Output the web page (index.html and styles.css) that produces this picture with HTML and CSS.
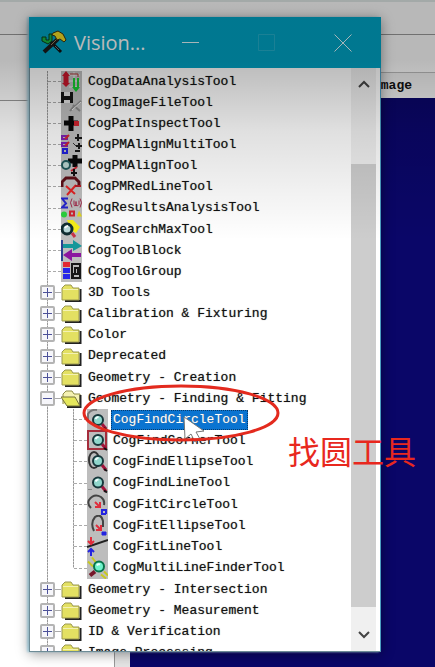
FILE: index.html
```html
<!DOCTYPE html>
<html lang="en">
<head>
<meta charset="utf-8">
<meta name="viewport" content="width=device-width, initial-scale=1">
<title>Vision tools</title>
<link rel="stylesheet" href="styles.css">
</head>
<body>
<svg class="defs" aria-hidden="true">
  <symbol id="folder" viewBox="0 0 21 21">
    <path d="M4 19h15.500V7" fill="none" stroke="#222" stroke-width="2"/>
    <path d="M1 18V6l3-3h6l2 3h6v12z" fill="#e3e062" stroke="#9a9850"/>
    <path d="M2 7.500h15" stroke="#f4f2b4" stroke-width="1"/>
  </symbol>
  <symbol id="folder-open" viewBox="0 0 21 21">
    <path d="M2 16V6l3-3h6l2 3h6v12" fill="#f4f1b2" stroke="#8d8b45"/>
    <path d="M19.500 7v12H6" fill="none" stroke="#222" stroke-width="2"/>
    <path d="M0 9h14l5 9H6z" fill="#e6e85c" stroke="#74723a"/>
  </symbol>
  <symbol id="lens" viewBox="0 0 21 21">
    <path d="M15 14l4 5" stroke="#a3123a" stroke-width="3"/>
    <path d="M17 18l3 2" stroke="#111" stroke-width="2"/>
    <circle cx="11" cy="10" r="5" fill="#8fd6cb" stroke="#17373b" stroke-width="2"/>
    <path d="M8.500 9q1-2 3-2" stroke="#f4ffff" stroke-width="2" fill="none"/>
  </symbol>
  <symbol id="data" viewBox="0 0 21 21">
    <path d="M8 4h11M8 10h11M8 16h11M13 1v17" stroke="#e8e8e8"/>
    <path d="M5 4v9" stroke="#c7172b" stroke-width="5"/>
    <path d="M1 5l4-5 4 5zM1 12l4 4 4-4z" fill="#c7172b"/>
    <path d="M9 3h8v3" stroke="#a33" fill="none"/>
    <path d="M13 7v10M17 7v10" stroke="#16c92f" stroke-width="2"/>
    <path d="M11 16l4 5 4-5z" fill="#16c92f"/>
  </symbol>
  <symbol id="file" viewBox="0 0 21 21">
    <path d="M0 0h3v11H0zM9 0h3v11H9zM3 4h6v4H3z" fill="#151515"/>
    <path d="M3 0h6v4H3zM3 8h6v3H3z" fill="#e0e0e0"/>
    <path d="M10 18L20 9M12 13l7 6M9 19l4-5" stroke="#8c8c8c" stroke-width="2"/>
    <path d="M11 18l9-8" stroke="#eee"/>
  </symbol>
  <symbol id="inspect" viewBox="0 0 21 21">
    <path d="M10 3v15M3 10h14" stroke="#080808" stroke-width="5"/>
    <path d="M13 8h5v5h-5z" fill="#d12530"/>
  </symbol>
  <symbol id="multi" viewBox="0 0 21 21">
    <path d="M1 2h5v3H1zM1 9h5v3H1z" fill="none" stroke="#7d22b5" stroke-width="2"/>
    <path d="M4 5l4-4M4 12l4-4" stroke="#d12530" stroke-width="2"/>
    <path d="M2 15h4v4H2z" fill="none" stroke="#2020db" stroke-width="2"/>
    <path d="M17 0v7M14 4h7M18 9v6M15 12h6M14 17h5" stroke="#171717" stroke-width="2"/>
    <path d="M12 9l3 3" stroke="#333"/>
  </symbol>
  <symbol id="align" viewBox="0 0 21 21">
    <path d="M14 0v12M7 6h14" stroke="#080808" stroke-width="5"/>
    <circle cx="5" cy="10" r="4" fill="#b8d4cf" stroke="#20585a" stroke-width="2"/>
    <path d="M10 16l6-4" stroke="#d12530" stroke-width="2"/>
    <path d="M13 14v7M10 18h6" stroke="#111" stroke-width="2"/>
  </symbol>
  <symbol id="redline" viewBox="0 0 21 21">
    <path d="M1 11V6l4-4h9l4 4v4" fill="none" stroke="#5c1017" stroke-width="3"/>
    <path d="M5 10l9 8M15 9l-9 10" stroke="#e02424" stroke-width="2"/>
    <path d="M14 10h6" stroke="#b51c24" stroke-width="2"/>
  </symbol>
  <symbol id="results" viewBox="0 0 21 21">
    <path d="M7 1H1l4 5-4 4h6" fill="none" stroke="#2525cc" stroke-width="2"/>
    <path d="M11 1q-3 4 0 9M19 1q3 4 0 9M13 3v4q0 2 2 1V4v4q2 1 3-1V3" fill="none" stroke="#a02b4b"/>
    <circle cx="3" cy="17" r="3" fill="#2bd13d"/>
    <path d="M9 14h4v4H9z" fill="none" stroke="#cf2230" stroke-width="2"/>
    <path d="M16 19l2-6 3 6z" fill="#e0d51e"/>
  </symbol>
  <symbol id="search" viewBox="0 0 21 21">
    <path d="M6 1h6l7 7-4 6-5-3z" fill="#f6ee19"/>
    <circle cx="6" cy="10" r="5" fill="#b8d8d8" stroke="#112d31" stroke-width="3"/>
    <path d="M4 9q1-2 3-2" stroke="#fff" stroke-width="2" fill="none"/>
    <path d="M11 14l3 4" stroke="#c83448" stroke-width="3"/>
  </symbol>
  <symbol id="block" viewBox="0 0 21 21">
    <path d="M1 0v21" stroke="#2b4190" stroke-width="2"/>
    <path d="M2 4h10V0l9 6-9 5V8H2z" fill="#15979a"/>
    <path d="M20 13h-9v-4l-9 6 9 6v-4h9z" fill="#8b159f"/>
  </symbol>
  <symbol id="group" viewBox="0 0 21 21">
    <path d="M2 1h7v5H2z" fill="#e22932"/>
    <path d="M2 7h7v5H2zM2 13h7v5H2z" fill="#2525e8"/>
    <path d="M11 3h8v14h-8z" fill="#bbb" stroke="#181818" stroke-width="2"/>
    <path d="M14 7h3v6h-3zM12 12v4" fill="none" stroke="#181818" stroke-width="2"/>
  </symbol>
  <symbol id="find-circle" viewBox="0 0 21 21">
    <path d="M1 12V5q3-5 9-4" fill="none" stroke="#777" stroke-width="2"/>
    <use href="#lens" y="1"/>
  </symbol>
  <symbol id="find-corner" viewBox="0 0 21 21">
    <path d="M1 1h18v18H1z" fill="none" stroke="#a52d3c" stroke-width="2"/>
    <use href="#lens"/>
  </symbol>
  <symbol id="find-ellipse" viewBox="0 0 21 21">
    <ellipse cx="7" cy="9" rx="5" ry="8" fill="none" stroke="#333" stroke-width="2"/>
    <use href="#lens"/>
  </symbol>
  <symbol id="find-line" viewBox="0 0 21 21">
    <path d="M1 17h4" stroke="#888"/>
    <use href="#lens"/>
  </symbol>
  <symbol id="fit-circle" viewBox="0 0 21 21">
    <path d="M4 14q-4-4-2-8 5-7 12-3 4 3 3 8" fill="none" stroke="#444" stroke-width="2"/>
    <path d="M8 8l5 5M13 8v5H8" fill="none" stroke="#df2e3d" stroke-width="2"/>
    <path d="M15 16h4v4M15 15v5h4" fill="none" stroke="#2424e0" stroke-width="2"/>
  </symbol>
  <symbol id="fit-ellipse" viewBox="0 0 21 21">
    <path d="M7 16Q3 8 8 2q6-4 8 4v6" fill="none" stroke="#444" stroke-width="2"/>
    <path d="M9 10l5 5M14 10v5H9" fill="none" stroke="#df2e3d" stroke-width="2"/>
    <path d="M15 17h4v3h-4z" fill="#2424e0" stroke="#2424e0"/>
  </symbol>
  <symbol id="fit-line" viewBox="0 0 21 21">
    <path d="M0 11L21 4" stroke="#222" stroke-width="2"/>
    <path d="M4 1v7M1 5l3 3 3-3" fill="none" stroke="#e22c3b" stroke-width="2"/>
    <path d="M4 20v-7M1 16l3-3 3 3" fill="none" stroke="#2424e0" stroke-width="2"/>
  </symbol>
  <symbol id="multi-line" viewBox="0 0 21 21">
    <path d="M1 4l5 5M5 0l4 5M14 17l5 4M17 14l4 4" stroke="#c8c81f" stroke-width="2"/>
    <path d="M8 14l-5 4" stroke="#761729" stroke-width="4"/>
    <circle cx="12" cy="9" r="5" fill="#70f3cb" stroke="#08734a" stroke-width="2"/>
    <path d="M10 8q1-2 3-1" stroke="#efffff" stroke-width="2" fill="none"/>
  </symbol>
</svg>

<div class="backdrop">
  <div class="strip"></div>
  <div class="panes">
    <div class="pane-left"><div class="toolbar"></div></div>
    <div class="gutter"></div>
    <div class="pane-right">
      <div class="toolbar-small"></div>
      <div class="tab">mage</div>
      <div class="canvas"></div>
    </div>
  </div>
</div>

<main class="window">
  <header class="titlebar">
    <svg class="app-icon" viewBox="0 0 26 26" aria-hidden="true">
      <path d="M9 11l11 11" stroke="#111" stroke-width="3"/>
      <path d="M14 16l4 4" stroke="#5e8790" stroke-width="1"/>
      <path d="M17 9L3 22" stroke="#1a1a1a" stroke-width="4"/>
      <path d="M17 8L10 15" stroke="#9b8060" stroke-width="1"/>
      <path d="M1 7h4v3h3V4h3v7l-4 3-6-3z" fill="#18b847" stroke="#0b3d1b" stroke-width="1"/>
      <path d="M12 3l5-2 5 3 3 6-2 2-4-3-3 1-2-4-3-1z" fill="#f4df25" stroke="#3c340b" stroke-width="1"/>
    </svg>
    <h1 class="title">Vision...</h1>
    <div class="controls">
      <button class="control" aria-label="Minimize"><svg viewBox="0 0 18 18"><path d="M0 8.500h17" /></svg></button>
      <button class="control" aria-label="Maximize" disabled><svg viewBox="0 0 18 18"><path d="M.5.5h16v16H.5z"/></svg></button>
      <button class="control" aria-label="Close"><svg viewBox="0 0 18 18"><path d="M.5.5l17 17M17.500.5l-17 17"/></svg></button>
    </div>
  </header>
  <div class="content">
    <div class="tree-view">
      <ul class="tree">
        <li><div class="row tool"><svg class="icon"><use href="#data"/></svg><span class="label">CogDataAnalysisTool</span></div></li>
        <li><div class="row tool"><svg class="icon"><use href="#file"/></svg><span class="label">CogImageFileTool</span></div></li>
        <li><div class="row tool"><svg class="icon"><use href="#inspect"/></svg><span class="label">CogPatInspectTool</span></div></li>
        <li><div class="row tool"><svg class="icon"><use href="#multi"/></svg><span class="label">CogPMAlignMultiTool</span></div></li>
        <li><div class="row tool"><svg class="icon"><use href="#align"/></svg><span class="label">CogPMAlignTool</span></div></li>
        <li><div class="row tool"><svg class="icon"><use href="#redline"/></svg><span class="label">CogPMRedLineTool</span></div></li>
        <li><div class="row tool"><svg class="icon"><use href="#results"/></svg><span class="label">CogResultsAnalysisTool</span></div></li>
        <li><div class="row tool"><svg class="icon"><use href="#search"/></svg><span class="label">CogSearchMaxTool</span></div></li>
        <li><div class="row tool"><svg class="icon"><use href="#block"/></svg><span class="label">CogToolBlock</span></div></li>
        <li><div class="row tool"><svg class="icon"><use href="#group"/></svg><span class="label">CogToolGroup</span></div></li>
        <li><div class="row"><button class="toggle" aria-label="Expand 3D Tools"></button><svg class="icon"><use href="#folder"/></svg><span class="label">3D Tools</span></div></li>
        <li><div class="row"><button class="toggle" aria-label="Expand Calibration &amp; Fixturing"></button><svg class="icon"><use href="#folder"/></svg><span class="label">Calibration &amp; Fixturing</span></div></li>
        <li><div class="row"><button class="toggle" aria-label="Expand Color"></button><svg class="icon"><use href="#folder"/></svg><span class="label">Color</span></div></li>
        <li><div class="row"><button class="toggle" aria-label="Expand Deprecated"></button><svg class="icon"><use href="#folder"/></svg><span class="label">Deprecated</span></div></li>
        <li><div class="row"><button class="toggle" aria-label="Expand Geometry - Creation"></button><svg class="icon"><use href="#folder"/></svg><span class="label">Geometry - Creation</span></div></li>
        <li>
          <div class="row"><button class="toggle open" aria-label="Collapse Geometry - Finding &amp; Fitting"></button><svg class="icon"><use href="#folder-open"/></svg><span class="label">Geometry - Finding &amp; Fitting</span></div>
          <ul class="branch">
            <li><div class="row tool"><svg class="icon"><use href="#find-circle"/></svg><span class="label selected">CogFindCircleTool</span>
              <svg class="ring" viewBox="0 0 200 60" aria-hidden="true"><ellipse cx="100" cy="30" rx="97" ry="27"/></svg>
              <svg class="cursor" viewBox="0 0 24 28" aria-hidden="true"><path d="M1 1l1 22 6-5 4 8 5-3-4-7 8-1z"/></svg></div></li>
            <li><div class="row tool"><svg class="icon"><use href="#find-corner"/></svg><span class="label">CogFindCornerTool</span></div></li>
            <li><div class="row tool"><svg class="icon"><use href="#find-ellipse"/></svg><span class="label">CogFindEllipseTool</span></div></li>
            <li><div class="row tool"><svg class="icon"><use href="#find-line"/></svg><span class="label">CogFindLineTool</span></div></li>
            <li><div class="row tool"><svg class="icon"><use href="#fit-circle"/></svg><span class="label">CogFitCircleTool</span></div></li>
            <li><div class="row tool"><svg class="icon"><use href="#fit-ellipse"/></svg><span class="label">CogFitEllipseTool</span></div></li>
            <li><div class="row tool"><svg class="icon"><use href="#fit-line"/></svg><span class="label">CogFitLineTool</span></div></li>
            <li><div class="row tool"><svg class="icon"><use href="#multi-line"/></svg><span class="label">CogMultiLineFinderTool</span></div></li>
          </ul>
        </li>
        <li><div class="row"><button class="toggle" aria-label="Expand Geometry - Intersection"></button><svg class="icon"><use href="#folder"/></svg><span class="label">Geometry - Intersection</span></div></li>
        <li><div class="row"><button class="toggle" aria-label="Expand Geometry - Measurement"></button><svg class="icon"><use href="#folder"/></svg><span class="label">Geometry - Measurement</span></div></li>
        <li><div class="row"><button class="toggle" aria-label="Expand ID &amp; Verification"></button><svg class="icon"><use href="#folder"/></svg><span class="label">ID &amp; Verification</span></div></li>
        <li><div class="row"><button class="toggle" aria-label="Expand Image Processing"></button><svg class="icon"><use href="#folder"/></svg><span class="label">Image Processing</span></div></li>
      </ul>
    </div>
    <div class="scrollbar">
      <button class="arrow" aria-label="Scroll up"><svg viewBox="0 0 14 10"><path d="M2 8l5-5 5 5"/></svg></button>
      <div class="track"><div class="thumb"></div></div>
      <button class="arrow" aria-label="Scroll down"><svg viewBox="0 0 14 10"><path d="M2 2l5 5 5-5"/></svg></button>
    </div>
  </div>
</main>
<div class="shade"></div>
<p class="note" lang="zh">找圆工具</p>
</body>
</html>
```
FILE: styles.css
```css
* { box-sizing: border-box; }
body {
  margin: 0;
  min-height: 100vh;
  position: relative;
  overflow: hidden;
  background: #fff;
  font-family: "Liberation Mono", "DejaVu Sans Mono", monospace;
  font-size: 13px;
  color: #111;
}
ul { list-style: none; margin: 0; padding: 0; }
button { border: 0; padding: 0; background: none; }
.defs { position: absolute; width: 0; height: 0; }

/* Application behind the tool window */
.backdrop { display: flex; flex-direction: column; height: 100vh; }
.strip { height: 35px; border-top: 2px solid #dfe8e6; border-bottom: 1px solid #999; background: #fcfcfc; }
.panes { flex: 1; display: flex; }
.pane-left { width: 115px; border-right: 1px solid #999; }
.toolbar { height: 66px; border-bottom: 1px solid #999; background: #fdfdfd; }
.gutter { width: 15px; background: #e4e4e4; }
.pane-right { flex: 1; display: flex; flex-direction: column; }
.toolbar-small { height: 37px; background: #fcfcfc; }
.tab {
  height: 26px;
  padding-right: 23px;
  border-top: 1px solid #bbb;
  background: #eee;
  line-height: 26px;
  text-align: right;
  font-weight: bold;
}
.canvas { flex: 1; background: #0a0668; }

/* Tool window */
.window {
  position: absolute;
  inset: 17px 54px 15px 29px;
  display: flex;
  flex-direction: column;
  border: 1px solid #6d8b96;
  border-right-color: #4a9cc0;
  background: #fff;
  box-shadow: 0 2px 12px rgba(0, 0, 0, .4), -2px 0 2px #b9e4f4;
}
.titlebar {
  display: flex;
  align-items: center;
  height: 51px;
  margin: -1px -1px 0;
  padding: 0 29px 0 12px;
  background: #00a4c6;
  color: #fff;
}
.app-icon { width: 26px; height: 26px; }
.title { margin: 0 0 0 7px; font: 20px "Open Sans", sans-serif; }
.controls { display: flex; gap: 58px; margin-left: auto; }
.control { width: 18px; height: 18px; }
.control svg { display: block; width: 18px; height: 18px; fill: none; stroke: #e4f8fc; stroke-width: 1; }
.control:disabled svg { stroke: #24b0cc; }

.content { flex: 1; display: flex; min-height: 0; padding-right: 4px; }
.tree-view { flex: 1; min-width: 0; overflow: hidden; padding: 3px 0 0 10px; }
.tree {
  background: repeating-linear-gradient(#999 0 2px, #ccc 2px 3px) 7px 0 / 1px 100% no-repeat;
}
.branch {
  background: repeating-linear-gradient(#999 0 2px, #ccc 2px 3px) 33px 0 / 1px calc(100% - 11px) no-repeat;
}
.row { position: relative; display: flex; align-items: center; height: 21px; white-space: nowrap; }
.tree > li:nth-child(7n) > .row, .branch > li:nth-child(4n) > .row { height: 22px; }
.row::before { content: ""; order: 1; width: 6px; border-top: 1px dashed #aaa; }
.tool::before { width: 13px; margin-left: 8px; }
.branch .tool::before { margin-left: 34px; }
.icon { order: 2; width: 21px; height: 21px; }
.tool .icon { height: 100%; background: #bdbdbd; }
.label { order: 3; margin-left: 4px; padding: 0 2px; line-height: 20px; text-shadow: 0 0 1px #777; }
.branch .label { margin-left: 3px; }
.selected { background: #0a74d1; color: #fff; outline: 1px dotted #073a6a; outline-offset: -1px; }
.toggle {
  width: 15px;
  height: 15px;
  border: 2px solid #b4b4b4;
  border-radius: 2px;
  background:
    linear-gradient(#4c5199, #4c5199) center / 9px 1px no-repeat,
    linear-gradient(#4c5199, #4c5199) center / 1px 9px no-repeat,
    #f6f6fa;
}
.toggle.open { background: linear-gradient(#4c5199, #4c5199) center / 9px 1px no-repeat, #f6f6fa; }

.scrollbar { width: 25px; display: flex; flex-direction: column; background: #f0f0f0; }
.arrow { height: 32px; }
.arrow svg { width: 14px; height: 10px; fill: none; stroke: #444; stroke-width: 2; }
.track { flex: 1; display: flex; flex-direction: column; padding: 64px 0 12px; }
.thumb { flex: 1; background: #cdcdcd; }

/* Annotations over the window */
.ring { position: absolute; z-index: 2; left: 41px; top: -26px; width: 200px; height: 60px; fill: none; stroke: #e32a1e; stroke-width: 3; }
.cursor { position: absolute; left: 143px; top: 7px; z-index: 1; width: 24px; height: 28px; fill: #fff; stroke: #777; }
.note {
  position: absolute;
  right: 19px;
  top: 426px;
  margin: 0;
  color: #e8281e;
  font: 32px/48px "Noto Sans CJK SC", sans-serif;
}
.shade {
  position: absolute;
  inset: 0 0 auto;
  height: 240px;
  pointer-events: none;
  background: linear-gradient(rgba(0, 0, 0, .27) 25%, rgba(0, 0, 0, .12) 55%, rgba(0, 0, 0, 0));
}
```
